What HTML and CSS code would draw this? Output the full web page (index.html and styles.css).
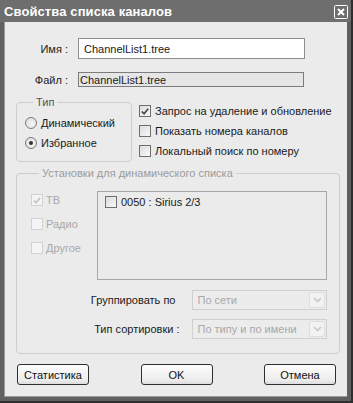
FILE: index.html
```html
<!DOCTYPE html>
<html lang="ru">
<head>
<meta charset="utf-8">
<title>Свойства списка каналов</title>
<link rel="stylesheet" href="styles.css">
</head>
<body>
<div class="window">
  <div class="titlebar">
    <span class="title">Свойства списка каналов</span>
    <span class="close">
      <svg width="14" height="14" viewBox="0 0 14 14"><rect x="0.5" y="0.5" width="13" height="13" rx="1" fill="none" stroke="#fff"/><path d="M4 4 L10 10 M10 4 L4 10" stroke="#fff" stroke-width="2"/></svg>
    </span>
  </div>
  <div class="content">
    <div class="field-row name-row">
      <span class="flabel">Имя :</span>
      <div class="input">ChannelList1.tree</div>
    </div>
    <div class="field-row file-row">
      <span class="flabel">Файл :</span>
      <div class="input readonly">ChannelList1.tree</div>
    </div>

    <div class="middle">
      <fieldset class="group type-group">
        <legend>Тип</legend>
        <div class="radio-row"><span class="radio"></span>Динамический</div>
        <div class="radio-row"><span class="radio checked"></span>Избранное</div>
      </fieldset>
      <div class="checks">
        <div class="check-row"><span class="cb checked"><svg width="11" height="11" viewBox="0 0 11 11"><path d="M2 5.5 L4.5 8 L9 2.5" fill="none" stroke="#444" stroke-width="1.8"/></svg></span>Запрос на удаление и обновление</div>
        <div class="check-row"><span class="cb"></span>Показать номера каналов</div>
        <div class="check-row"><span class="cb"></span>Локальный поиск по номеру</div>
      </div>
    </div>

    <fieldset class="group dyn-group">
      <legend>Установки для динамического списка</legend>
      <div class="dyn-top">
        <div class="dyn-checks">
          <div class="dcheck"><span class="cb dis"><svg width="11" height="11" viewBox="0 0 11 11"><path d="M2 5.5 L4.5 8 L9 2.5" fill="none" stroke="#c4c4c4" stroke-width="1.8"/></svg></span>ТВ</div>
          <div class="dcheck"><span class="cb dis"></span>Радио</div>
          <div class="dcheck"><span class="cb dis"></span>Другое</div>
        </div>
        <div class="listbox">
          <div class="list-item"><span class="cb"></span>0050 : Sirius 2/3</div>
        </div>
      </div>
      <div class="combo-row first-row">
        <span class="clabel first">Группировать по</span>
        <div class="combo"><span class="ctext">По сети</span><span class="carrow"><svg width="9" height="6" viewBox="0 0 9 6"><path d="M1 1 L4.5 4.5 L8 1" fill="none" stroke="#c8c8c8" stroke-width="1.6"/></svg></span></div>
      </div>
      <div class="combo-row">
        <span class="clabel">Тип сортировки :</span>
        <div class="combo"><span class="ctext">По типу и по имени</span><span class="carrow"><svg width="9" height="6" viewBox="0 0 9 6"><path d="M1 1 L4.5 4.5 L8 1" fill="none" stroke="#c8c8c8" stroke-width="1.6"/></svg></span></div>
      </div>
    </fieldset>

    <div class="buttons">
      <button class="btn">Статистика</button>
      <button class="btn">OK</button>
      <button class="btn">Отмена</button>
    </div>
  </div>
</div>
</body>
</html>
```
FILE: styles.css
```css
* { box-sizing: border-box; }
html, body { margin: 0; padding: 0; }
body {
  width: 353px;
  height: 403px;
  background: #3a3a3a;
  font-family: "Liberation Sans", Arial, sans-serif;
  font-size: 11px;
  color: #1a1a1a;
}
.window {
  width: 353px;
  height: 403px;
  display: flex;
  flex-direction: column;
  background: #606060;
  border-right: 2px solid #2e2e2e;
  border-bottom: 2px solid #2e2e2e;
}
.titlebar {
  height: 22px;
  flex: none;
  display: flex;
  align-items: center;
  justify-content: space-between;
  padding: 0 3px 0 4px;
  background: #6e6e6e;
}
.title {
  color: #fff;
  font-weight: bold;
  font-size: 13px;
  letter-spacing: 0.1px;
}
.close { display: flex; margin-top: 1px; }
.content {
  flex: 1;
  margin: 0 4px 4px 4px;
  background: #ebebeb;
  padding: 16px 8px 0 11px;
  display: flex;
  flex-direction: column;
  border-left: 1px solid #9a9a9a;
  border-bottom: 1px solid #9a9a9a;
}
.field-row {
  display: flex;
  align-items: center;
  gap: 10px;
}
.flabel {
  width: 52px;
  text-align: right;
  color: #222;
}
.input {
  width: 227px;
  height: 21px;
  border: 1px solid #8e8e8e;
  background: #fff;
  padding: 0 0 0 5px;
  display: flex;
  align-items: center;
}
.file-row { margin-top: 13px; }
.input.readonly {
  height: 15px;
  width: 226px;
  background: #e6e6e6;
  border: 1px solid #7c7c7c;
  padding-left: 1px;
}
.middle {
  display: flex;
  margin-top: 9px;
  gap: 7px;
  white-space: nowrap;
}
.group {
  margin: 0;
  border: 1px solid #cdcdcd;
  border-radius: 4px;
  min-width: 0;
}
.group legend {
  padding: 0 3px;
  margin-left: 8px;
  color: #555;
  line-height: 12px;
}
.type-group {
  width: 116px;
  height: 66px;
  padding: 5px 0 0 8px;
}
.radio-row {
  display: flex;
  align-items: center;
  height: 20px;
  gap: 4px;
}
.radio {
  width: 12px;
  height: 12px;
  border-radius: 50%;
  border: 1px solid #7a7a7a;
  background: radial-gradient(circle at 60% 60%, #f4f4f4, #dcdcdc);
  display: flex;
  align-items: center;
  justify-content: center;
}
.radio.checked::after {
  content: "";
  width: 4px;
  height: 4px;
  border-radius: 50%;
  background: #333;
}
.checks {
  padding-top: 5px;
  display: flex;
  flex-direction: column;
}
.check-row {
  display: flex;
  align-items: center;
  gap: 4px;
  height: 20px;
}
.cb {
  width: 12px;
  height: 12px;
  border: 1px solid #6e6e6e;
  background: linear-gradient(135deg, #dcdcdc, #f8f8f8);
  display: flex;
  align-items: center;
  justify-content: center;
  flex: none;
}
.cb.dis {
  border-color: #d2d2d2;
  background: #f4f4f4;
}
.dyn-group {
  margin-top: 5px;
  height: 187px;
  width: 324px;
  padding: 12px 12px 0 14px;
}
.dyn-group legend { color: #9c9c9c; }
.dyn-top {
  display: flex;
}
.dyn-checks {
  width: 66px;
  display: flex;
  flex-direction: column;
  gap: 6px;
}
.dcheck {
  display: flex;
  align-items: center;
  gap: 3px;
  height: 18px;
  color: #a8a8a8;
}
.listbox {
  width: 230px;
  height: 89px;
  border: 1px solid #a6a6a6;
  padding: 4px 0 0 7px;
}
.list-item {
  display: flex;
  align-items: center;
  gap: 4px;
}
.combo-row {
  display: flex;
  align-items: center;
  margin-top: 9px;
}
.combo-row.first-row { margin-top: 10px; }
.clabel {
  width: 162px;
  text-align: right;
  padding-right: 13px;
}
.clabel.first { padding-right: 17px; }
.combo {
  width: 135px;
  height: 20px;
  border: 1px solid #d0d0d0;
  background: #ececec;
  display: flex;
  align-items: center;
  justify-content: space-between;
  padding: 1px;
}
.ctext {
  color: #a8a8a8;
  padding-left: 3px;
}
.carrow {
  width: 16px;
  height: 16px;
  border: 1px solid #dedede;
  background: #f2f2f2;
  display: flex;
  align-items: center;
  justify-content: center;
  border-radius: 2px;
}
.buttons {
  display: flex;
  justify-content: space-between;
  margin-top: 10px;
  padding: 0 3px 0 1px;
}
.btn {
  width: 72px;
  height: 21px;
  border: 1px solid #2f2f2f;
  border-radius: 3px;
  background: linear-gradient(#fdfdfd, #ececec 80%, #dcdcdc);
  font-family: "Liberation Sans", Arial, sans-serif;
  font-size: 11px;
  color: #111;
  padding: 0;
}
```
